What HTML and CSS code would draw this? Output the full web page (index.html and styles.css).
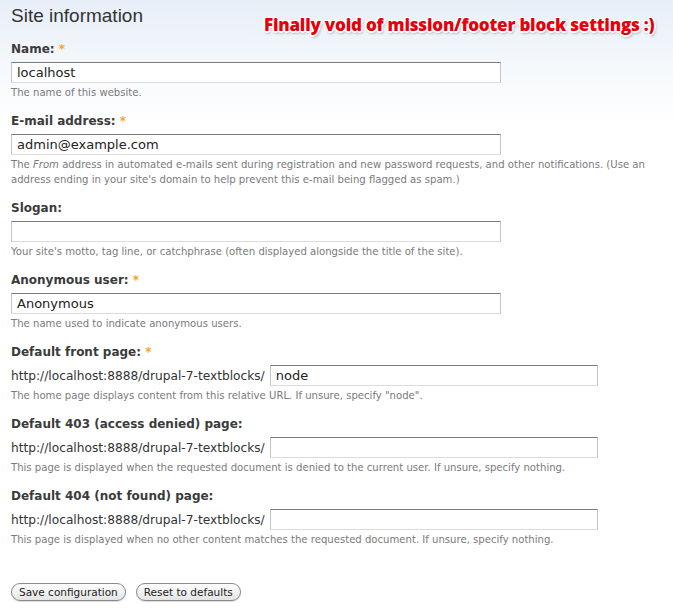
FILE: index.html
```html
<!DOCTYPE html>
<html>
<head>
<meta charset="utf-8">
<title>Site information</title>
<link rel="stylesheet" href="styles.css">
</head>
<body>
<div class="page">
  <h1 class="title">Site information</h1>
  <div class="note">Finally void of mission/footer block settings :)</div>
  <form class="form">
    <div class="field">
      <label class="label">Name: <span class="req">*</span></label>
      <input class="text wide" type="text" value="localhost">
      <div class="help">The name of this website.</div>
    </div>
    <div class="field">
      <label class="label">E-mail address: <span class="req">*</span></label>
      <input class="text wide" type="text" value="admin@example.com">
      <div class="help">The <em>From</em> address in automated e-mails sent during registration and new password requests, and other notifications. (Use an address ending in your site's domain to help prevent this e-mail being flagged as spam.)</div>
    </div>
    <div class="field">
      <label class="label">Slogan:</label>
      <input class="text wide" type="text" value="">
      <div class="help">Your site's motto, tag line, or catchphrase (often displayed alongside the title of the site).</div>
    </div>
    <div class="field">
      <label class="label">Anonymous user: <span class="req">*</span></label>
      <input class="text wide" type="text" value="Anonymous">
      <div class="help">The name used to indicate anonymous users.</div>
    </div>
    <div class="field">
      <label class="label">Default front page: <span class="req">*</span></label>
      <div class="row"><span class="prefix">http://localhost:8888/drupal-7-textblocks/</span><input class="text short" type="text" value="node"></div>
      <div class="help">The home page displays content from this relative URL. If unsure, specify "node".</div>
    </div>
    <div class="field">
      <label class="label">Default 403 (access denied) page:</label>
      <div class="row"><span class="prefix">http://localhost:8888/drupal-7-textblocks/</span><input class="text short" type="text" value=""></div>
      <div class="help">This page is displayed when the requested document is denied to the current user. If unsure, specify nothing.</div>
    </div>
    <div class="field">
      <label class="label">Default 404 (not found) page:</label>
      <div class="row"><span class="prefix">http://localhost:8888/drupal-7-textblocks/</span><input class="text short" type="text" value=""></div>
      <div class="help">This page is displayed when no other content matches the requested document. If unsure, specify nothing.</div>
    </div>
    <div class="actions">
      <button class="btn" type="button">Save configuration</button>
      <button class="btn" type="button">Reset to defaults</button>
    </div>
  </form>
</div>
</body>
</html>
```
FILE: styles.css
```css
html, body {
  margin: 0;
  padding: 0;
}
body {
  background: linear-gradient(to bottom, #e6eef7 0px, #f6f9fc 70px, #ffffff 130px);
  min-height: 615px;
  font-family: "DejaVu Sans", Verdana, sans-serif;
  color: #333;
}
.page {
  position: relative;
  padding: 0 11px;
}
.title {
  margin: 0;
  padding-top: 4px;
  font-family: "Liberation Sans", Arial, sans-serif;
  font-weight: normal;
  font-size: 19px;
  line-height: 24px;
  color: #333;
  height: 38px;
}
.note {
  position: absolute;
  left: 264px;
  top: 13px;
  font-family: "Open Sans", Lato, sans-serif;
  font-weight: 800;
  font-size: 17px;
  letter-spacing: -0.2px;
  line-height: 24px;
  white-space: nowrap;
  color: #e6000a;
  text-shadow:
    1.5px 0 0 #fff, -1.5px 0 0 #fff, 0 1.5px 0 #fff, 0 -1.5px 0 #fff,
    1.2px 1.2px 0 #fff, -1.2px 1.2px 0 #fff, 1.2px -1.2px 0 #fff, -1.2px -1.2px 0 #fff,
    1px 2px 3px rgba(0,0,0,0.45);
}
.field {
  margin-bottom: 14px;
}
.label {
  display: block;
  font-family: "DejaVu Sans", Verdana, sans-serif;
  font-weight: bold;
  font-size: 12px;
  line-height: 15px;
  color: #3b3b3b;
  margin-bottom: 5px;
}
.req {
  color: #f5a623;
}
.text {
  box-sizing: border-box;
  height: 21px;
  margin: 0;
  padding: 0 5px;
  border: 1px solid #c4c4c4;
  border-top-color: #7d7d7d;
  border-bottom-color: #dcdcdc;
  background: #fff;
  font-family: "DejaVu Sans", Verdana, sans-serif;
  font-size: 13px;
  color: #222;
  display: block;
  border-radius: 0;
}
.wide {
  width: 490px;
}
.short {
  width: 328px;
}
.row {
  display: flex;
  align-items: center;
  gap: 5px;
}
.prefix {
  font-size: 12.2px;
  color: #333;
  white-space: nowrap;
}
.help {
  margin-top: 2px;
  font-size: 10.1px;
  line-height: 15px;
  color: #7a7a7a;
}
.help em {
  font-style: italic;
}
.actions {
  margin-top: 36px;
  display: flex;
  gap: 10px;
}
.btn {
  box-sizing: border-box;
  height: 18px;
  padding: 0 7px;
  border: 1px solid #8a8a8a;
  border-radius: 9px;
  background: linear-gradient(to bottom, #ffffff 0%, #f2f2f2 50%, #e4e4e4 100%);
  box-shadow: 0 1px 1px rgba(0,0,0,0.15);
  font-family: "DejaVu Sans", Verdana, sans-serif;
  font-size: 10.5px;
  line-height: 16px;
  color: #222;
}
```
